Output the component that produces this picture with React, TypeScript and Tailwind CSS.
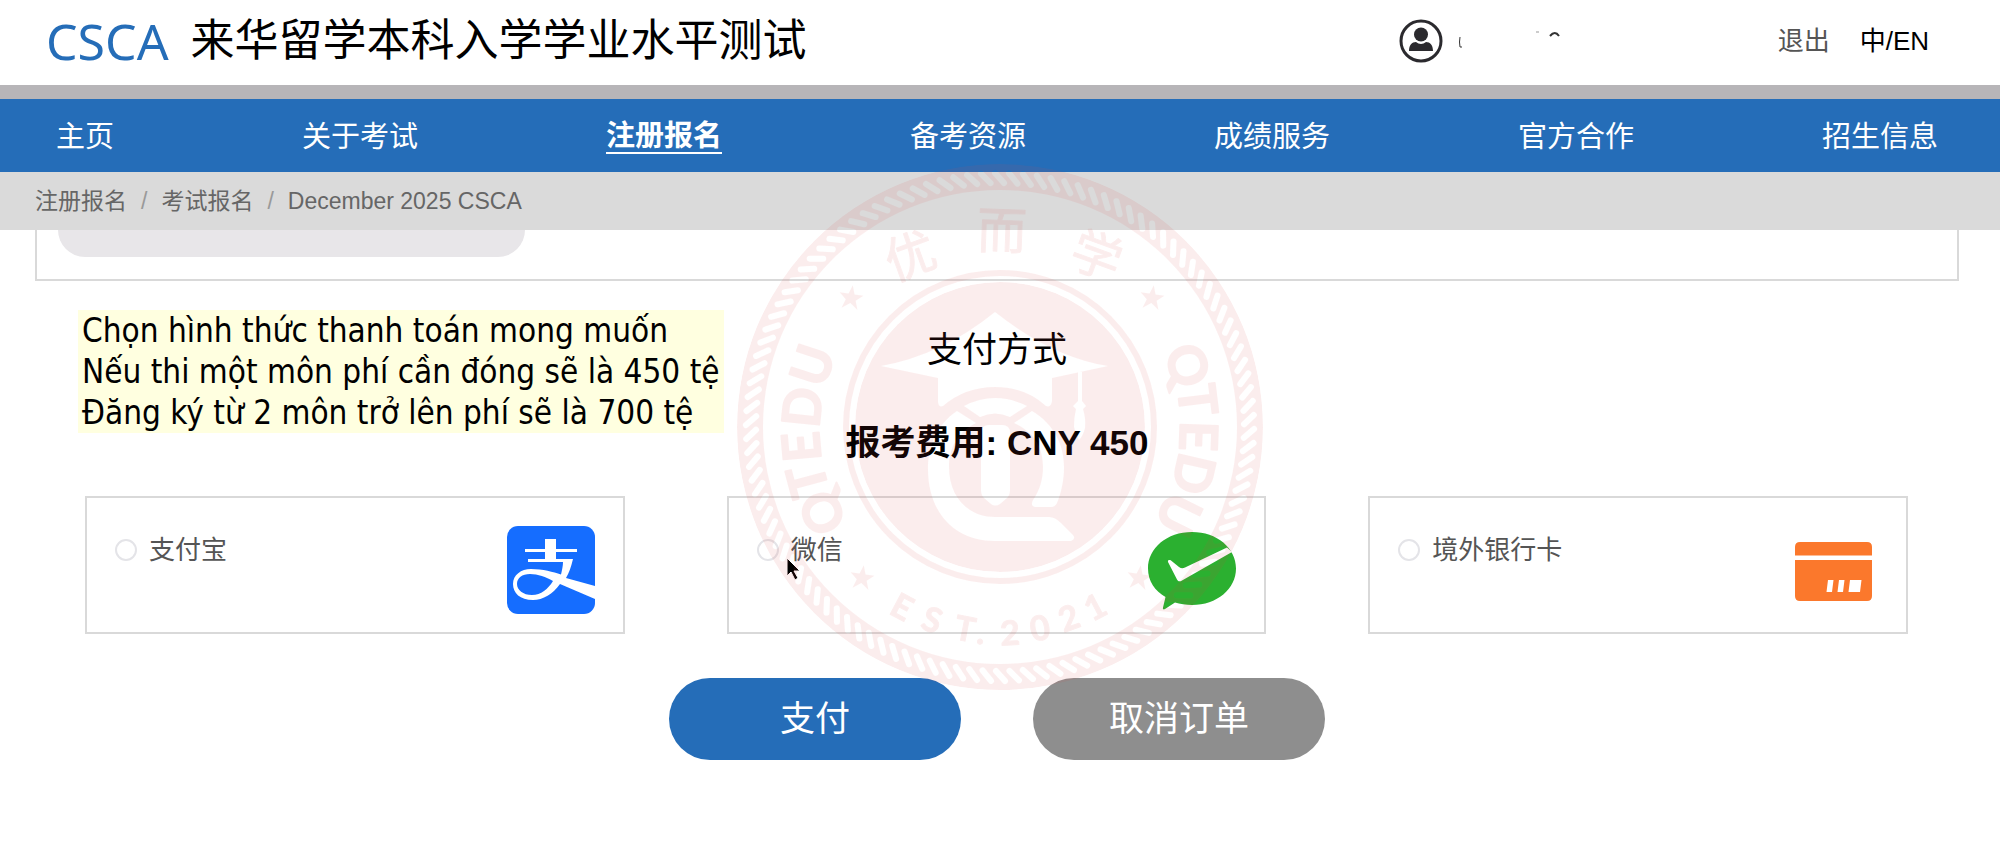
import { useState } from 'react';
import type { ReactNode } from 'react';

const NAV_ITEMS = ['主页', '关于考试', '注册报名', '备考资源', '成绩服务', '官方合作', '招生信息'];
const ACTIVE_ITEM = '注册报名';

function UserIcon() {
  return (
    <svg viewBox="0 0 44 44" className="size-11" aria-hidden>
      <circle cx="22" cy="22" r="20" fill="none" stroke="#2b2a2e" strokeWidth="3" />
      <circle cx="22" cy="15.500" r="7" fill="#2b2a2e" />
      <path d="M10 32c0-6 3-9 7-9 3 2.500 7 2.500 10 0 4 0 7 3 7 9z" fill="#2b2a2e" />
    </svg>
  );
}

/** Leftover strokes of the account name, which is blanked out. */
function MaskedName() {
  return (
    <svg viewBox="0 0 120 30" className="h-[30px] w-[120px]" fill="none" stroke="#333" aria-hidden>
      <path d="M9 11q-1 5 0 10h2" strokeWidth="1" />
      <path d="M85 6h3" strokeWidth="1" stroke="#999" />
      <path d="M99 10q5-6 9 0" strokeWidth="2" />
    </svg>
  );
}

function AlipayIcon() {
  return (
    <svg viewBox="0 0 88 88" className="size-[88px]" aria-hidden>
      <rect width="88" height="88" rx="11" fill="#156dff" />
      <path
        fill="#fff"
        fillRule="evenodd"
        d="M38 13H49V23H70V26H49V33H66C64 41 62 47 59 52L88 60V73L53 58C46 68 36 74 26 74C13 74 6 67 6 58C6 49 14 43 24 43C36 43 46 46 54 48.500C55 44 56 40 56 36H21V33H38V26H18V23H38ZM10 58C10 64 16 69 25 69C34 69 41 63 46 55C39 51 31 48 23 48C15 48 10 52 10 58Z"
      />
    </svg>
  );
}

function WechatIcon() {
  return (
    <svg viewBox="0 0 88 88" className="size-[88px]" aria-hidden>
      <path
        fill="#2bb030"
        d="M44 6C69 6 88 22 88 42.500S69 79 44 79C38 79 32 78 27 76.500L17 83C15.500 84 14.500 83 15 81.500L17.500 71C7 65 0 55 0 42.500C0 22 19 6 44 6Z"
      />
      <path
        fill="#fff"
        d="M20 36C19.500 34 21.500 33.500 23 34.500L31 41C33 42.500 35 42.500 37 41.500L79 21.500L84 26L34 54.500C32 56 30 55.500 29 53.500Z"
      />
    </svg>
  );
}

function BankCardIcon() {
  return (
    <svg viewBox="0 0 88 88" className="size-[88px]" aria-hidden>
      <path fill="#fb782c" d="M10 16H77Q82 16 82 21V29.500H5V21Q5 16 10 16ZM5 34H82V70Q82 75 77 75H10Q5 75 5 70Z" />
      <path fill="#fff" d="M38 54h5.500l-1.500 12h-5.500zM49 54h5.500l-1.500 12h-5.500zM60 54h11.500l-1.500 12h-11.500z" />
    </svg>
  );
}

function Cursor() {
  return (
    <svg viewBox="0 0 16 24" className="absolute left-[57px] top-[59px] h-6 w-4" aria-hidden>
      <path d="M1 1v18l4-4 4 8 3-2-4-7h6z" fill="#000" stroke="#fff" strokeWidth="1" />
    </svg>
  );
}

type Glyph = { char: string; x: number; y: number; angle: number };

const SEAL_NAME: Glyph[] = [
  { char: '优', x: -90, y: -172, angle: -20 },
  { char: '而', x: 2, y: -197, angle: 2 },
  { char: '学', x: 97, y: -172, angle: 20 },
];

const SEAL_SIDES: Glyph[] = [
  { char: 'Q', x: -178, y: 86, angle: -116 },
  { char: 'T', x: -193, y: 54, angle: -105 },
  { char: 'E', x: -199, y: 20, angle: -95 },
  { char: 'D', x: -198, y: -20, angle: -84 },
  { char: 'U', x: -188, y: -62, angle: -72 },
  { char: 'Q', x: 188, y: -62, angle: 72 },
  { char: 'T', x: 198, y: -27, angle: 83 },
  { char: 'E', x: 199, y: 9, angle: 92 },
  { char: 'D', x: 194, y: 47, angle: 103 },
  { char: 'U', x: 179, y: 88, angle: 116 },
];

const SEAL_YEAR: Glyph[] = [
  { char: 'E', x: -98, y: 180, angle: 28 },
  { char: 'S', x: -68, y: 193, angle: 20 },
  { char: 'T', x: -35, y: 202, angle: 11 },
  { char: '.', x: -19, y: 205, angle: 6 },
  { char: '2', x: 10, y: 206, angle: -3 },
  { char: '0', x: 40, y: 201, angle: -11 },
  { char: '2', x: 69, y: 191, angle: -20 },
  { char: '1', x: 95, y: 180, angle: -28 },
];

const STARS = [
  [-149, -129],
  [152, -129],
  [-138, 151],
  [139, 151],
];

const ROPE_COUNT = 114;

function SealText({ glyphs, className, shift }: { glyphs: Glyph[]; className: string; shift: number }) {
  return (
    <>
      {glyphs.map((g) => (
        <text
          key={`${g.char}${g.x}`}
          textAnchor="middle"
          y={shift}
          transform={`translate(${g.x} ${g.y}) rotate(${g.angle})`}
          className={className}
        >
          {g.char}
        </text>
      ))}
    </>
  );
}

function Seal() {
  return (
    <svg
      viewBox="-263 -263 526 526"
      className="pointer-events-none absolute left-1/2 top-[164px] size-[526px] -translate-x-1/2 opacity-[0.09]"
      fill="#dc4444"
      stroke="#dc4444"
      strokeWidth="0"
      strokeLinejoin="round"
      aria-hidden
    >
      <mask id="rope" maskUnits="userSpaceOnUse" x="-263" y="-263" width="526" height="526">
        <circle r="263" fill="#fff" />
        <circle r="237" fill="#000" />
        {Array.from({ length: ROPE_COUNT }, (_, i) => (
          <path
            key={i}
            d="M-5 -254L4 -244"
            fill="none"
            stroke="#000"
            strokeWidth="6"
            strokeLinecap="round"
            transform={`rotate(${(i * 360) / ROPE_COUNT})`}
          />
        ))}
      </mask>
      <mask id="emblem" maskUnits="userSpaceOnUse" x="-150" y="-150" width="300" height="300">
        <circle r="145" fill="#fff" />
        <g fill="#000">
          <path d="M-5-115Q52-70 108-61L52-49V-26Q51-19 46-21Q25-40-5-40T-57-21Q-62-19-62-26V-49L-119-61Q-58-72-5-115Z" />
          <path d="M-36-21Q-5-37 27-21L10-10Q-5-17-20-10Z" />
          <path d="M-43-16C-64-2-72 20-72 42C-72 85-46 114-5 114H71Q76 112 73 108L61 96Q55 90 49 90H-5C-32 90-51 70-51 40C-51 20-42 5-24-4Z" />
          <path d="M32-16C54-3 64 18 64 40C64 54 61 66 57 76Q55 80 51 80H35Q30 79 33 73C40 63 43 52 43 40C43 18 32 4 14-4Z" />
          <path d="M-19 6Q-19-2-11-2H2Q10-2 10 6V64Q10 68 7 71L0 77Q-5 80-9 77L-16 71Q-19 68-19 64Z" />
          <path d="M78-55H82V-26L86-21L83-18Q86-8 85 1Q83 9 79 13Q75 6 74 0Q74-10 76-18L73-21L78-26Z" />
        </g>
      </mask>
      <circle r="263" mask="url(#rope)" />
      <circle r="154" fill="none" strokeWidth="6" />
      <circle r="145" mask="url(#emblem)" />
      {STARS.map(([x, y]) => (
        <path
          key={`${x},${y}`}
          transform={`translate(${x} ${y}) rotate(8)`}
          d="M0-13L3-4H12L5 2L8 11L0 5L-8 11L-5 2L-12-4H-3Z"
        />
      ))}
      <SealText
        glyphs={SEAL_NAME}
        shift={19}
        className="font-['Noto_Sans_CJK_SC',sans-serif] text-[50px] [stroke-width:1px]"
      />
      <SealText
        glyphs={SEAL_SIDES}
        shift={19}
        className="font-[Lato,sans-serif] text-[52px] font-bold [stroke-width:2px]"
      />
      <SealText
        glyphs={SEAL_YEAR}
        shift={12}
        className="font-[Lato,sans-serif] text-[34px] font-bold [stroke-width:1px]"
      />
    </svg>
  );
}

type PaymentOptionProps = {
  id: string;
  label: string;
  icon: ReactNode;
  checked: boolean;
  onSelect: (id: string) => void;
  children?: ReactNode;
};

function PaymentOption({ id, label, icon, checked, onSelect, children }: PaymentOptionProps) {
  return (
    <div className="relative flex items-start justify-between border-2 border-[#d9d9d9] px-7 pb-[18px] pt-7">
      <label htmlFor={id} className="flex h-12 items-center gap-3 text-[26px] text-[#555]">
        <input
          id={id}
          type="radio"
          name="payment"
          checked={checked}
          onChange={() => onSelect(id)}
          className="size-[22px] appearance-none rounded-full border-2 border-[#e4e4e8] checked:border-[7px] checked:border-[#256db8]"
        />
        {label}
      </label>
      {icon}
      {children}
    </div>
  );
}

export default function App() {
  const [method, setMethod] = useState('');

  return (
    <div className="relative min-h-screen bg-white font-['Liberation_Sans','Noto_Sans_CJK_SC',sans-serif] text-black">
      <header className="flex h-[99px] items-center justify-between border-b-[14px] border-[#b7b5b8] pb-[3px] pl-[46px] pr-[71px]">
        <div className="flex items-center gap-[22px]">
          <span className="font-['Noto_Sans',sans-serif] text-[50px] leading-[60px] text-[#256db8]">CSCA</span>
          <h1 className="text-[44px] leading-[60px]">来华留学本科入学学业水平测试</h1>
        </div>
        <div className="flex items-center text-[26px]">
          <UserIcon />
          <div className="ml-2 mr-[207px]">
            <MaskedName />
          </div>
          <a href="#logout" className="mr-[30px] text-[#555]">
            退出
          </a>
          <button type="button">中/EN</button>
        </div>
      </header>

      <nav className="flex h-[73px] items-center justify-between bg-[#256db8] pl-14 pr-[62px] pt-[3px] text-[29px] text-white">
        {NAV_ITEMS.map((item) => (
          <a
            key={item}
            href="#nav"
            className={item === ACTIVE_ITEM ? 'border-b-2 border-white font-bold leading-8' : 'leading-8'}
          >
            {item}
          </a>
        ))}
      </nav>

      <div className="flex h-[58px] items-center gap-[14px] bg-[#dadada] pl-[35px] text-[23px] text-[#666]">
        <a href="#register">注册报名</a>
        <span className="text-[#999]">/</span>
        <a href="#exam">考试报名</a>
        <span className="text-[#999]">/</span>
        <span>December 2025 CSCA</span>
      </div>

      <main className="ml-[35px] mr-[41px] flex flex-col">
        <div className="h-[51px] border-x-2 border-b-2 border-[#d9d9d9] pl-[21px]">
          <div className="h-[27px] w-[467px] rounded-b-[27px] bg-[#e8e6e9]" />
        </div>

        <h2 className="mt-[47px] text-center text-[35px] leading-11">支付方式</h2>
        <p className="mt-[49px] text-center text-[35px] font-bold leading-11">报考费用: CNY 450</p>

        <div className="mt-[31px] grid grid-cols-3 gap-[102px] pl-[50px] pr-[51px]">
          <PaymentOption
            id="alipay"
            label="支付宝"
            icon={<AlipayIcon />}
            checked={method === 'alipay'}
            onSelect={setMethod}
          />
          <PaymentOption
            id="wechat"
            label="微信"
            icon={<WechatIcon />}
            checked={method === 'wechat'}
            onSelect={setMethod}
          >
            <Cursor />
          </PaymentOption>
          <PaymentOption
            id="card"
            label="境外银行卡"
            icon={<BankCardIcon />}
            checked={method === 'card'}
            onSelect={setMethod}
          />
        </div>

        <div className="mt-11 flex justify-center gap-[72px] text-[35px] text-white">
          <button type="button" className="h-[82px] w-[292px] rounded-full bg-[#256db8]">
            支付
          </button>
          <button type="button" className="h-[82px] w-[292px] rounded-full bg-[#8e8e8e]">
            取消订单
          </button>
        </div>
      </main>

      <Seal />

      <div className="absolute left-[78px] top-[310px] bg-[#ffffe0] px-1 font-['DejaVu_Sans_Condensed','Noto_Sans',sans-serif] text-[33px] leading-[41px]">
        <p>Chọn hình thức thanh toán mong muốn</p>
        <p>Nếu thi một môn phí cần đóng sẽ là 450 tệ</p>
        <p>Đăng ký từ 2 môn trở lên phí sẽ là 700 tệ</p>
      </div>
    </div>
  );
}
